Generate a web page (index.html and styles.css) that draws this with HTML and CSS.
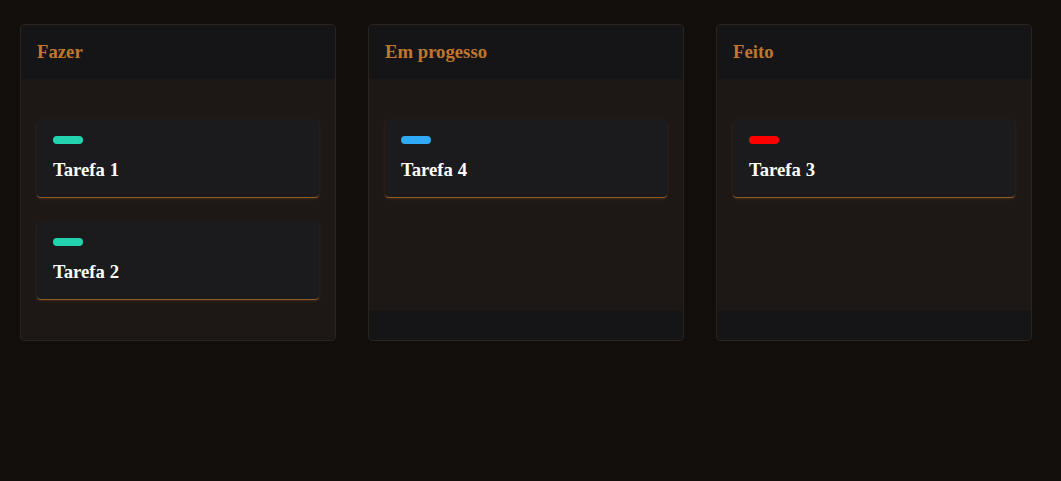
FILE: index.html
```html
<!DOCTYPE html>
<html lang="pt">
<head>
<meta charset="utf-8">
<title>Quadro</title>
<link rel="stylesheet" href="styles.css">
</head>
<body>
<main class="board">
  <section class="column">
    <header class="column-header"><h2>Fazer</h2></header>
    <div class="column-body">
      <article class="card"><span class="tag tag-teal"></span><h3>Tarefa 1</h3></article>
      <article class="card"><span class="tag tag-teal"></span><h3>Tarefa 2</h3></article>
    </div>
  </section>
  <section class="column">
    <header class="column-header"><h2>Em progesso</h2></header>
    <div class="column-body">
      <article class="card"><span class="tag tag-blue"></span><h3>Tarefa 4</h3></article>
    </div>
    <footer class="column-footer"></footer>
  </section>
  <section class="column">
    <header class="column-header"><h2>Feito</h2></header>
    <div class="column-body">
      <article class="card"><span class="tag tag-red"></span><h3>Tarefa 3</h3></article>
    </div>
    <footer class="column-footer"></footer>
  </section>
</main>
</body>
</html>
```
FILE: styles.css
```css
html, body {
  margin: 0;
  padding: 0;
  background: #120e0b;
  font-family: "Liberation Serif", "Times New Roman", serif;
}
.board {
  display: grid;
  grid-template-columns: repeat(3, 316px);
  column-gap: 32px;
  padding: 24px 20px;
  align-items: stretch;
}
.column {
  display: flex;
  flex-direction: column;
  border: 1px solid #2a231f;
  border-radius: 4px;
  background: #1d1816;
  overflow: hidden;
}
.column-header {
  background: #151517;
  padding: 16px 16px;
}
.column-header h2 {
  margin: 0;
  font-size: 18.72px;
  line-height: normal;
  font-weight: bold;
  color: #c0762c;
}
.column-body {
  flex: 1;
  padding: 41px 16px 16px;
}
.column-footer {
  height: 29px;
  background: #151517;
}
.card {
  background: #1b1b1d;
  border-radius: 4px;
  padding: 16px 16px 16px;
  margin-bottom: 24px;
  border-bottom: 1px solid #8f5c28;
  box-shadow: 0 1px 3px rgba(150, 90, 35, 0.3);
}
.tag {
  display: block;
  width: 30px;
  height: 8px;
  border-radius: 4px;
}
.tag-teal { background: #22d3b0; }
.tag-blue { background: #2faaf6; }
.tag-red { background: #ff0000; }
.card h3 {
  margin: 15px 0 0;
  font-size: 18.72px;
  line-height: normal;
  font-weight: bold;
  color: #ffffff;
}
```
